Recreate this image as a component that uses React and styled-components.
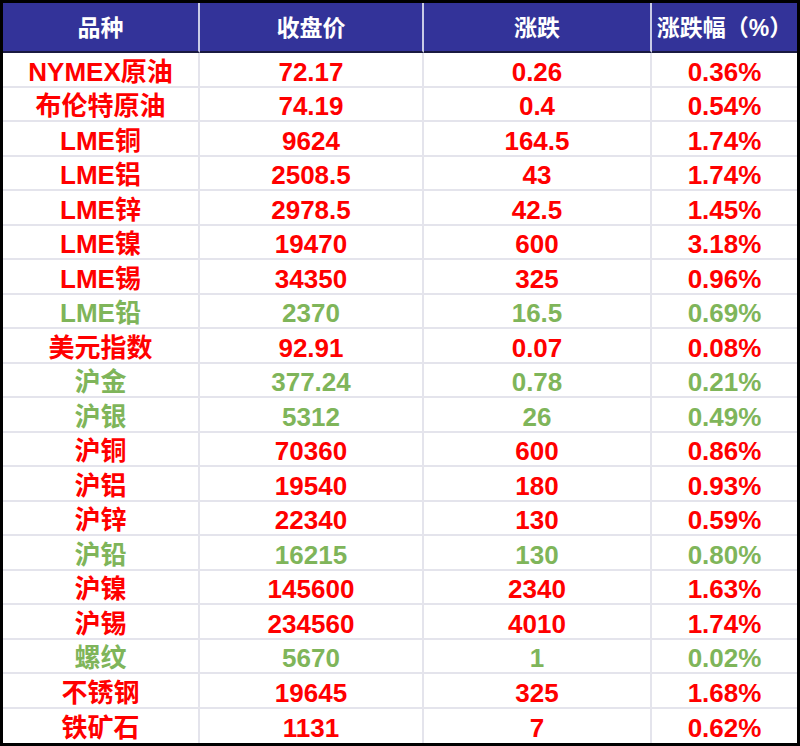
import React from "react";
import styled, { createGlobalStyle } from "styled-components";

const rows = [
  { name: "NYMEX原油", close: "72.17", chg: "0.26", pct: "0.36%", up: true },
  { name: "布伦特原油", close: "74.19", chg: "0.4", pct: "0.54%", up: true },
  { name: "LME铜", close: "9624", chg: "164.5", pct: "1.74%", up: true },
  { name: "LME铝", close: "2508.5", chg: "43", pct: "1.74%", up: true },
  { name: "LME锌", close: "2978.5", chg: "42.5", pct: "1.45%", up: true },
  { name: "LME镍", close: "19470", chg: "600", pct: "3.18%", up: true },
  { name: "LME锡", close: "34350", chg: "325", pct: "0.96%", up: true },
  { name: "LME铅", close: "2370", chg: "16.5", pct: "0.69%", up: false },
  { name: "美元指数", close: "92.91", chg: "0.07", pct: "0.08%", up: true },
  { name: "沪金", close: "377.24", chg: "0.78", pct: "0.21%", up: false },
  { name: "沪银", close: "5312", chg: "26", pct: "0.49%", up: false },
  { name: "沪铜", close: "70360", chg: "600", pct: "0.86%", up: true },
  { name: "沪铝", close: "19540", chg: "180", pct: "0.93%", up: true },
  { name: "沪锌", close: "22340", chg: "130", pct: "0.59%", up: true },
  { name: "沪铅", close: "16215", chg: "130", pct: "0.80%", up: false },
  { name: "沪镍", close: "145600", chg: "2340", pct: "1.63%", up: true },
  { name: "沪锡", close: "234560", chg: "4010", pct: "1.74%", up: true },
  { name: "螺纹", close: "5670", chg: "1", pct: "0.02%", up: false },
  { name: "不锈钢", close: "19645", chg: "325", pct: "1.68%", up: true },
  { name: "铁矿石", close: "1131", chg: "7", pct: "0.62%", up: true },
];

const GlobalStyle = createGlobalStyle`
  html, body {
    margin: 0;
    padding: 0;
    background: #fff;
  }
`;

const Board = styled.div`
  box-sizing: border-box;
  width: 800px;
  height: 746px;
  border: 3px solid #000;
  display: grid;
  grid-template-columns: 197px 224px 228px 1fr;
  grid-template-rows: 50px repeat(20, 1fr);
  font-family: "Liberation Sans", "Noto Sans CJK SC", Arial, sans-serif;
  font-weight: bold;
  background: #fff;
`;

const HeadCell = styled.div`
  background: #333399;
  color: #fff;
  font-size: 23px;
  line-height: 1;
  padding-top: 3px;
  display: flex;
  align-items: center;
  justify-content: center;
  border-bottom: 2px solid #1a1a40;
  border-right: ${(p) => (p.$last ? "none" : "2px solid #c9cbe6")};
  box-sizing: border-box;
`;

const Cell = styled.div`
  color: ${(p) => (p.$up ? "#ff0000" : "#7fb55a")};
  font-size: 26px;
  line-height: 1;
  padding-top: 5px;
  display: flex;
  align-items: center;
  justify-content: center;
  box-sizing: border-box;
  border-bottom: ${(p) => (p.$bottom ? "none" : "2px solid #e4e4ec")};
  border-right: ${(p) => (p.$last ? "none" : "2px solid #e4e4ec")};
`;

const headers = ["品种", "收盘价", "涨跌", "涨跌幅（%）"];

export default function App() {
  return (
    <>
      <GlobalStyle />
      <Board>
        {headers.map((h, i) => (
          <HeadCell key={h} $last={i === 3}>
            {h}
          </HeadCell>
        ))}
        {rows.map((r, ri) => {
          const bottom = ri === rows.length - 1;
          return [r.name, r.close, r.chg, r.pct].map((v, ci) => (
            <Cell key={`${ri}-${ci}`} $up={r.up} $last={ci === 3} $bottom={bottom}>
              {v}
            </Cell>
          ));
        })}
      </Board>
    </>
  );
}
